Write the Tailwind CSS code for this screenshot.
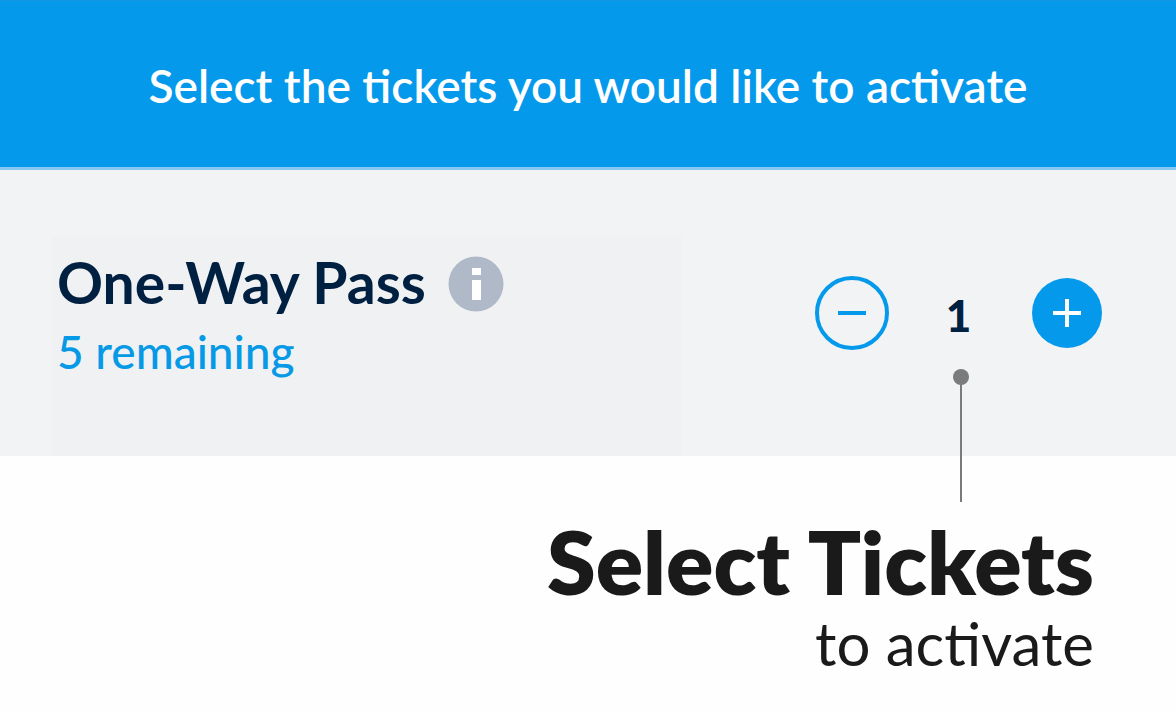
<!DOCTYPE html>
<html lang="en">
  <head>
    <meta charset="UTF-8" />
    <meta name="viewport" content="width=device-width, initial-scale=1.0" />
    <title>Select Tickets</title>
    <script src="https://cdn.jsdelivr.net/npm/@tailwindcss/browser@4"></script>
  </head>
  <body class="min-h-screen bg-[#fefefe] font-['Lato',sans-serif]">
    <!-- Banner -->
    <header class="border-t border-b-3 border-t-[#1496e0] border-b-[#86c8f1] bg-[#0599ec] px-8 pt-[55px] pb-[51px] text-center">
      <h1 class="font-['Lato_Semibold','Lato',sans-serif] text-[46px] leading-[60px] font-semibold text-white">
        Select the tickets you would like to activate
      </h1>
    </header>

    <main>
      <!-- Ticket row -->
      <section class="flex items-start justify-between bg-[#f1f3f5] pt-[66px] pr-[74px] pl-[52px]">
        <div class="w-3/5 bg-[#f0f1f3] px-[5px] pt-[11px] pb-[69px]">
          <div class="flex items-center gap-[22px]">
            <h2 class="text-[57px] leading-[70px] font-bold text-[#002041]">One-Way Pass</h2>
            <button type="button" class="mt-1" aria-label="Pass information">
              <svg class="size-14" viewBox="0 0 56 56">
                <circle cx="28" cy="28" r="27.5" fill="#b0b9c8" />
                <path d="M24 12h9v7h-9zM24 24h9v20h-9z" fill="#fff" />
              </svg>
            </button>
          </div>
          <p class="font-['Lato_Medium','Lato',sans-serif] text-[46px] leading-[70px] font-medium text-[#0599e6]">5 remaining</p>
        </div>

        <!-- Quantity stepper -->
        <div class="flex items-center pt-[21px]">
          <button type="button" aria-label="Remove a ticket">
            <svg class="size-[74px]" viewBox="0 0 74 74" fill="none" stroke="#0599ec">
              <circle cx="37" cy="37" r="35" stroke-width="4" />
              <path d="M23 37h28" stroke-width="4" />
            </svg>
          </button>
          <div class="relative w-[143px] pt-7 pr-1 pb-6 text-center">
            <output class="block text-[44px] leading-[60px] font-black text-[#002041]">1</output>
            <!-- Callout pin -->
            <svg class="absolute top-full left-1/2 h-[134px] w-4 -translate-x-1/2" viewBox="0 0 16 134">
              <circle cx="8" cy="8" r="8" fill="#7b7b7e" />
              <path d="M8 8v125" stroke="#7b7b7e" stroke-width="2" />
            </svg>
          </div>
          <button type="button" aria-label="Add a ticket">
            <svg class="size-[70px]" viewBox="0 0 70 70" fill="none">
              <circle cx="35" cy="35" r="35" fill="#0599ec" />
              <path d="M21 35h28M35 21v28" stroke="#fff" stroke-width="4" />
            </svg>
          </button>
        </div>
      </section>

      <!-- Caption -->
      <section class="px-[82px] pt-[59px] text-right text-[#1a1a1a]">
        <h2 class="text-[88px] leading-[92px] font-extrabold">Select Tickets</h2>
        <p class="text-[60px] leading-[72px]">to activate</p>
      </section>
    </main>
  </body>
</html>
